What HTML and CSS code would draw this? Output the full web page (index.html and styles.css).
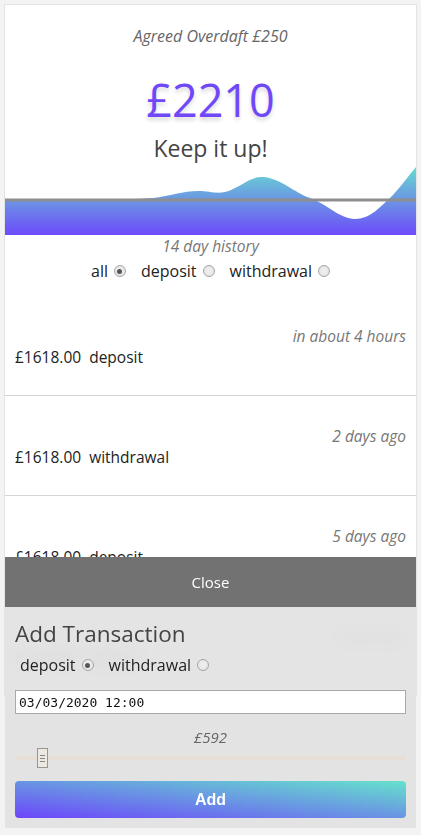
FILE: index.html
```html
<!DOCTYPE html>
<html lang="en">
<head>
<meta charset="utf-8">
<title>Balance</title>
<link rel="stylesheet" href="styles.css">
</head>
<body>
<main class="card">
  <section class="summary">
    <p class="overdraft">Agreed Overdaft £250</p>
    <h1 class="balance">£2210</h1>
    <p class="motto">Keep it up!</p>
  </section>
  <svg class="chart" viewBox="0 0 411 70" preserveAspectRatio="none">
    <defs>
      <linearGradient id="area" x1="0" y1="0" x2="0" y2="1">
        <stop offset="0" stop-color="#66dccf"/>
        <stop offset="0.45" stop-color="#6c9ae2"/>
        <stop offset="1" stop-color="#6d4bfb"/>
      </linearGradient>
    </defs>
    <path d="M0,35 C60,35 120,35 148,33 C165,31 178,26 193,26 C205,26 210,29 220,27 C235,23 245,11 258,12 C275,13 290,28 305,33 C322,39 335,54 350,54 C365,54 375,42 385,33 C395,23 404,10 411,2 L411,70 L0,70 Z" fill="url(#area)"/>
    <line x1="0" y1="35" x2="411" y2="35" stroke="#8e8e8e" stroke-width="3"/>
  </svg>
  <p class="history">14 day history</p>
  <div class="filters">
    <span class="opt">all <span class="radio on"></span></span>
    <span class="opt">deposit <span class="radio"></span></span>
    <span class="opt">withdrawal <span class="radio"></span></span>
  </div>
  <ul class="list">
    <li class="item"><span class="when">in about 4 hours</span><span class="what">£1618.00&nbsp;&nbsp;deposit</span></li>
    <li class="item"><span class="when">2 days ago</span><span class="what">£1618.00&nbsp;&nbsp;withdrawal</span></li>
    <li class="item"><span class="when">5 days ago</span><span class="what">£1618.00&nbsp;&nbsp;deposit</span></li>
    <li class="item"><span class="when">6 days ago</span><span class="what">£1618.00&nbsp;&nbsp;deposit</span></li>
  </ul>
</main>
<aside class="panel">
  <div class="close">Close</div>
  <div class="form">
    <h2 class="title">Add Transaction</h2>
    <div class="types">
      <span class="opt">deposit <span class="radio on"></span></span>
      <span class="opt">withdrawal <span class="radio"></span></span>
    </div>
    <input class="date" type="text" value="03/03/2020 12:00">
    <p class="amount">£592</p>
    <div class="slider"><span class="track"></span><span class="thumb"><i></i><i></i><i></i></span></div>
    <button class="add">Add</button>
  </div>
</aside>
</body>
</html>
```
FILE: styles.css
```css
* { box-sizing: border-box; }
html, body { margin: 0; }
body {
  background: #f3f3f3;
  padding: 4px 4px 0;
  font-family: "Open Sans", "Noto Sans", sans-serif;
  color: #222;
}
.card {
  background: #fff;
  border: 1px solid #e3e3e3;
  border-bottom: 0;
}
.summary { text-align: center; padding-top: 20px; }
.overdraft {
  margin: 0;
  font-size: 16px;
  line-height: 22px;
  font-style: italic;
  color: #666;
}
.balance {
  margin: 23px 0 0;
  font-size: 45px;
  line-height: 60px;
  font-weight: 400;
  color: #7048f8;
  text-shadow: 0 3px 4px rgba(0,0,0,0.16);
}
.motto {
  margin: 2px 0 0;
  font-size: 23px;
  line-height: 32px;
  color: #444;
}
.chart { display: block; width: 100%; height: 70px; margin-top: 1px; }
.history {
  margin: 0;
  text-align: center;
  font-size: 15.5px;
  line-height: 22px;
  font-style: italic;
  color: #777;
}
.filters {
  display: flex;
  justify-content: center;
  gap: 15px;
  height: 28px;
  align-items: center;
  font-size: 16px;
}
.opt { display: inline-flex; align-items: center; gap: 6px; color: #222; }
.radio {
  width: 12px; height: 12px;
  border-radius: 50%;
  border: 1px solid #a5a5a5;
  background: radial-gradient(circle, #f0f0f0 0, #e2e2e2 100%);
  display: inline-flex; align-items: center; justify-content: center;
}
.radio.on::after {
  content: "";
  width: 5px; height: 5px;
  border-radius: 50%;
  background: #555;
}
.list { list-style: none; margin: 11px 0 0; padding: 0; }
.item {
  display: flex;
  flex-direction: column;
  height: 100px;
  padding: 30px 10px 0;
  border-bottom: 1px solid #d6d6d6;
}
.when {
  align-self: flex-end;
  font-size: 15.5px;
  line-height: 20px;
  font-style: italic;
  color: #777;
}
.what { font-size: 15.5px; line-height: 22px; color: #222; }

.panel {
  position: fixed;
  left: 5px; right: 5px; bottom: 7px;
  height: 271px;
  display: flex;
  flex-direction: column;
  background: rgba(224,224,224,0.88);
  backdrop-filter: blur(10px);
}
.close {
  height: 50px;
  display: flex; align-items: center; justify-content: center;
  background: rgba(104,104,104,0.92);
  color: #fff;
  font-size: 15px;
}
.form { padding: 12px 10px 0; display: flex; flex-direction: column; }
.title {
  margin: 0;
  font-size: 22.5px;
  line-height: 30px;
  font-weight: 400;
  color: #444;
}
.types {
  display: flex;
  gap: 15px;
  height: 24px;
  align-items: center;
  margin-top: 4px;
  padding-left: 5px;
  font-size: 16px;
}
.date {
  margin-top: 13px;
  height: 24px;
  border: 1px solid #a9a9a9;
  background: #fff;
  padding: 0 3px;
  font-family: "DejaVu Sans Mono", "Liberation Mono", monospace;
  font-size: 13px;
  color: #111;
  outline: none;
}
.amount {
  margin: 13px 0 0;
  text-align: center;
  font-size: 15px;
  line-height: 20px;
  font-style: italic;
  color: #666;
}
.slider { position: relative; height: 20px; margin-top: 1px; display: flex; align-items: center; }
.track { display: block; width: 100%; height: 4px; background: #e6dfd5; }
.thumb {
  position: absolute;
  left: 22px; top: 0;
  width: 11px; height: 20px;
  border: 1px solid #9a958f;
  background: #ece8e2;
  display: flex; flex-direction: column; align-items: center; justify-content: center; gap: 2px;
}
.thumb i { display: block; width: 5px; height: 1px; background: #8a857f; }
.add {
  margin-top: 13px;
  height: 37px;
  border: 0;
  border-radius: 4px;
  background: linear-gradient(to top right, #6c46fb, #66e2cc);
  color: #fff;
  font-family: "Liberation Sans", Arial, sans-serif;
  font-weight: 700;
  font-size: 16px;
}
```
